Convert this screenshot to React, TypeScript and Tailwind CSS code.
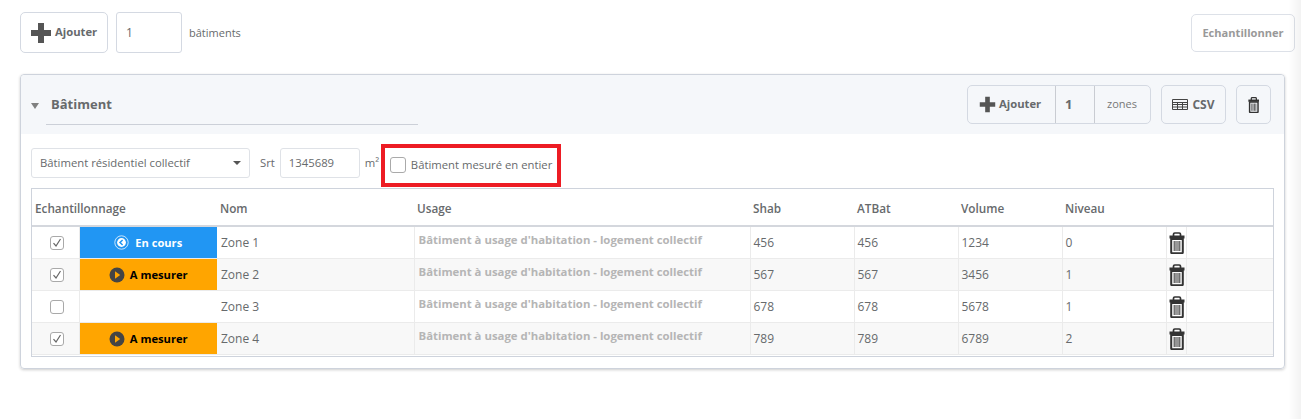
const font = "font-['Open_Sans','Noto_Sans',sans-serif]";

function Plus({ size = 22 }: { size?: number }) {
  return (
    <svg width={size} height={size} viewBox="0 0 22 22" className="shrink-0">
      <path d="M8 1h6v7h7v6h-7v7H8v-7H1V8h7z" fill="#555" />
    </svg>
  );
}

function Trash({ h = 22, color = "#333" }: { h?: number; color?: string }) {
  return (
    <svg width={(h * 16) / 22} height={h} viewBox="0 0 16 22" className="shrink-0">
      <path d="M4.5 4V2.2C4.5 1.4 5 1 5.8 1h4.4c.8 0 1.3.4 1.3 1.2V4" fill="none" stroke={color} strokeWidth="1.7" />
      <path d="M.5 3.5h15v3H.5z" fill={color} />
      <path d="M2.2 7h11.6v13.5a.8.8 0 0 1-.8.8H3a.8.8 0 0 1-.8-.8z" fill="none" stroke={color} strokeWidth="2" />
      <path d="M5.2 9v10M7 9v10M9 9v10M10.8 9v10" stroke={color} strokeWidth="1" />
    </svg>
  );
}

function TableIcon() {
  return (
    <svg width="16" height="11" viewBox="0 0 16 11" className="shrink-0">
      <path d="M.5.5h15v10H.5zM.5 3.5h15M.5 5.5h15M.5 8h15M5.5 3v8M10.5 3v8" fill="none" stroke="#444" strokeWidth="1" />
    </svg>
  );
}

function Play() {
  return (
    <svg width="16" height="16" viewBox="0 0 16 16" className="shrink-0">
      <circle cx="8" cy="8" r="7.5" fill="#444" />
      <path d="M6 4.2 11.2 8 6 11.8z" fill="#ffa500" />
    </svg>
  );
}

function Back() {
  return (
    <svg width="15" height="15" viewBox="0 0 15 15" className="shrink-0">
      <circle cx="7.5" cy="7.5" r="6.7" fill="none" stroke="#fff" strokeOpacity=".75" strokeWidth="1" />
      <circle cx="7.5" cy="7.5" r="4.4" fill="#fff" />
      <path d="M8.6 5 6 7.5l2.6 2.5" fill="none" stroke="#2196f3" strokeWidth="1.5" />
    </svg>
  );
}

function Check({ on }: { on: boolean }) {
  return (
    <span className="flex h-[14px] w-[14px] items-center justify-center rounded-[3px] border border-[#a9a9a9] bg-white">
      {on && (
        <svg width="10" height="10" viewBox="0 0 10 10">
          <path d="M1.5 5.2 4 8 8.5 1" fill="none" stroke="#666" strokeWidth="1.2" />
        </svg>
      )}
    </span>
  );
}

const rows = [
  { on: true, st: "cours", nom: "Zone 1", shab: "456", at: "456", vol: "1234", niv: "0" },
  { on: true, st: "mes", nom: "Zone 2", shab: "567", at: "567", vol: "3456", niv: "1" },
  { on: false, st: "", nom: "Zone 3", shab: "678", at: "678", vol: "5678", niv: "1" },
  { on: true, st: "mes", nom: "Zone 4", shab: "789", at: "789", vol: "6789", niv: "2" },
];

const th = "h-[37px] border-b-2 border-[#d4d7dd] px-[3px] pt-[3px] text-left text-[11.75px] font-semibold text-[#676a6c]";
const cell = "border-r border-b border-[#ebebeb]";
const td = `${cell} pl-[3px] text-[12px] text-[#676a6c]`;

export default function App() {
  return (
    <div className={`${font} relative h-[419px] w-[1301px] overflow-hidden bg-white text-[#676a6c]`}>
      <div className="flex h-[74px] items-start pl-5 pr-[6px] pt-3">
        <button className="flex h-[41px] w-[88px] items-center gap-[3px] rounded-[5px] border border-[#d4d9e2] pl-[9px] text-[11.25px] font-bold text-[#676a6c]">
          <Plus /> Ajouter
        </button>
        <div className="ml-2 flex h-[41px] w-[66px] items-center rounded-[3px] border border-[#d4d9e2] pl-[9px] text-[12px]">1</div>
        <span className="ml-[7px] mt-[14px] text-[11px] leading-[14px]">bâtiments</span>
        <button className="ml-auto mt-0.5 h-[38px] w-[104px] rounded-[5px] border border-[#dde1e8] text-[11.1px] font-bold text-[#999]">
          Echantillonner
        </button>
      </div>

      <div className="ml-5 h-[295px] w-[1265px] rounded-[4px] border border-[#ced3dc] shadow-[0_1px_3px_rgba(0,0,0,0.2)]">
        <div className="flex h-[59px] items-center rounded-t-[4px] bg-[#f5f7fa]">
          <span className="ml-[10px] mt-[2px] h-0 w-0 border-x-[4px] border-t-[6px] border-x-transparent border-t-[#808080]" />
          <div className="ml-[7px] mt-[2px] flex h-[39px] w-[372px] items-center border-b border-[#ccd0d8] pl-[5px] text-[13px] font-bold text-[#676a6c]">
            Bâtiment
          </div>
          <div className="ml-auto mr-[13px] flex items-center">
            <div className="flex h-[39px] w-[184px] items-center rounded-[5px] border border-[#d4d9e2] text-[11.25px] font-bold">
              <div className="flex h-full w-[88px] items-center gap-[3px] border-r border-[#c9ccd2] pl-[11px]">
                <Plus size={17} /> Ajouter
              </div>
              <div className="flex h-full w-[39px] items-center border-r border-[#c9ccd2] pl-[9px] text-[13px] font-bold">1</div>
              <div className="flex-1 pl-[12px] text-[11px] font-normal text-[#777]">zones</div>
            </div>
            <button className="ml-[10px] flex h-[39px] w-[65px] items-center justify-center gap-[4px] rounded-[5px] border border-[#d4d9e2] text-[12px] font-bold text-[#676a6c]">
              <TableIcon /> CSV
            </button>
            <button className="ml-[10px] flex h-[39px] w-[35px] items-center justify-center rounded-[5px] border border-[#d4d9e2]">
              <Trash h={16} />
            </button>
          </div>
        </div>

        <div className="px-[10px]">
          <div className="flex h-[54px] items-center pt-1 text-[11.3px]">
            <div className="flex h-[30px] w-[219px] items-center justify-between rounded-[3px] border border-[#dfe2e7] pl-2 pr-[8px]">
              <span>Bâtiment résidentiel collectif</span>
              <span className="h-0 w-0 border-x-[4px] border-t-[4px] border-x-transparent border-t-[#555]" />
            </div>
            <span className="ml-[10px]">Srt</span>
            <div className="ml-[5px] flex h-[30px] w-[80px] items-center rounded-[3px] border border-[#dfe2e7] pl-2">1345689</div>
            <span className="ml-[5px] w-[17px]">m²</span>
            <div className="-ml-px mt-1 flex h-[43px] w-[180px] items-center border-4 border-[#ed1c24] pl-[5px]">
              <span className="h-4 w-4 rounded-[3px] border border-[#aaa]" />
              <span className="ml-[5px]">Bâtiment mesuré en entier</span>
            </div>
          </div>

          <div className="h-[169px] w-[1243px] border border-[#ced3dc]">
            <table className="w-[1241px] table-fixed border-collapse">
              <colgroup>
                <col className="w-[47px]" />
                <col className="w-[138px]" />
                <col className="w-[197px]" />
                <col className="w-[336px]" />
                <col className="w-[104px]" />
                <col className="w-[104px]" />
                <col className="w-[104px]" />
                <col className="w-[104px]" />
                <col className="w-[20px]" />
                <col />
              </colgroup>
              <thead>
                <tr>
                  <th colSpan={2} className={th}>Echantillonnage</th>
                  <th className={th}>Nom</th>
                  <th className={th}>Usage</th>
                  <th className={th}>Shab</th>
                  <th className={th}>ATBat</th>
                  <th className={th}>Volume</th>
                  <th className={th}>Niveau</th>
                  <th colSpan={2} className={th}></th>
                </tr>
              </thead>
              <tbody>
                {rows.map((r, i) => (
                  <tr key={r.nom} className={`h-[32px] ${i % 2 ? "bg-[#f8f8f8]" : "bg-white"}`}>
                    <td className={`${cell} pl-[3px]`}>
                      <div className="flex justify-center"><Check on={r.on} /></div>
                    </td>
                    <td className="border-b border-[#ebebeb] p-0">
                      {r.st === "cours" && (
                        <div className="flex h-[31px] items-center justify-center gap-[6px] bg-[#2196f3] text-[11.1px] font-bold text-white">
                          <Back /> <span className="mt-0.5">En cours</span>
                        </div>
                      )}
                      {r.st === "mes" && (
                        <div className="flex h-[31px] items-center justify-center gap-[5px] bg-[#ffa500] text-[11.2px] font-bold text-black">
                          <Play /> <span className="mt-0.5">A mesurer</span>
                        </div>
                      )}
                    </td>
                    <td className={`${cell} pl-[4px] text-[12px] text-[#676a6c]`}>{r.nom}</td>
                    <td className={`${cell} pb-[6px] pl-[4px] text-[11.36px] font-bold text-[#b5b5b5]`}>Bâtiment à usage d'habitation - logement collectif</td>
                    <td className={td}>{r.shab}</td>
                    <td className={td}>{r.at}</td>
                    <td className={td}>{r.vol}</td>
                    <td className={td}>{r.niv}</td>
                    <td className={`${cell} pl-[2px]`}><Trash /></td>
                    <td className="border-b border-[#ebebeb]"></td>
                  </tr>
                ))}
              </tbody>
            </table>
          </div>
        </div>
      </div>
      <div className="pointer-events-none absolute inset-y-0 right-0 w-[13px] bg-gradient-to-r from-transparent to-[#000]/[0.05]" />
    </div>
  );
}
